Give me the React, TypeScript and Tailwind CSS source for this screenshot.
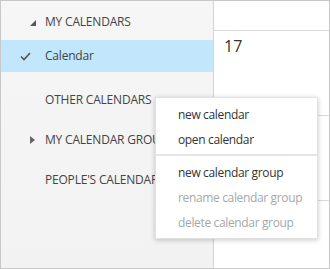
import React from 'react';

const font = { fontFamily: '"Open Sans", "Noto Sans", sans-serif' };

function Caret({ dir }: { dir: 'down' | 'right' }) {
  if (dir === 'down') {
    return (
      <svg width="6" height="6" viewBox="0 0 6 6" className="shrink-0">
        <path d="M6 0 L6 6 L0 6 Z" fill="#555" />
      </svg>
    );
  }
  return (
    <svg width="5" height="8" viewBox="0 0 5 8" className="shrink-0">
      <path d="M0 0 L5 4 L0 8 Z" fill="#666" />
    </svg>
  );
}

function Check() {
  return (
    <svg width="11" height="9" viewBox="0 0 11 9" className="shrink-0">
      <path d="M1 4.5 L4 7.5 L10 1" fill="none" stroke="#555" strokeWidth="1.6" />
    </svg>
  );
}

export default function App() {
  const menu = [
    { label: 'new calendar', disabled: false },
    { label: 'open calendar', disabled: false },
    { sep: true },
    { label: 'new calendar group', disabled: false },
    { label: 'rename calendar group', disabled: true },
    { label: 'delete calendar group', disabled: true },
  ];

  return (
    <div className="relative w-[330px] h-[269px] border border-[#c8c8c8] flex bg-white overflow-hidden text-[12px] text-[#444]" style={font}>
      {/* left pane */}
      <div className="w-[212px] h-full bg-gradient-to-b from-[#f6f6f6] to-[#f2f2f2] flex flex-col shrink-0 tracking-[-0.2px]">
        <div className="h-[39px] pt-[3px] flex items-center">
          <div className="w-[44px] flex justify-end pr-[9px] pt-[1px]"><Caret dir="down" /></div>
          <span>MY CALENDARS</span>
        </div>
        <div className="h-8 bg-[#c2e6fb] flex items-center">
          <div className="w-[44px] flex pl-[19px]"><Check /></div>
          <span>Calendar</span>
        </div>
        <div className="mt-2 h-10 flex items-center pl-[44px]">
          <span>OTHER CALENDARS</span>
        </div>
        <div className="h-10 flex items-center">
          <div className="w-[44px] flex pl-[29px]"><Caret dir="right" /></div>
          <span className="whitespace-nowrap">MY CALENDAR GROUPS</span>
        </div>
        <div className="h-10 flex items-center pl-[44px]">
          <span className="whitespace-nowrap">PEOPLE'S CALENDARS</span>
        </div>
      </div>

      {/* right pane */}
      <div className="flex-1 border-l border-[#d4d4d4] flex flex-col">
        <div className="h-[30px] border-b border-[#d8d8d8]"></div>
        <div className="h-[85px] border-b border-[#d8d8d8] pl-[10px] pt-[3px]">
          <span className="text-[16px] text-[#333]">17</span>
        </div>
        <div className="h-[85px] border-b border-[#d8d8d8]"></div>
      </div>

      {/* context menu */}
      <div className="absolute left-[154px] top-[96px] w-[163px] bg-white border border-[#e2e2e2] shadow-[0_1px_5px_rgba(0,0,0,0.22)] pt-1 pb-[3px] tracking-[-0.35px]">
        {menu.map((m, i) =>
          m.sep ? (
            <div key={i} className="mt-[2px] mb-[4px] h-[2px] bg-[#e6e6e6]"></div>
          ) : (
            <div key={i} className={`h-[25px] flex items-center pl-[22px] ${m.disabled ? 'text-[#a3a9a9]' : 'text-[#333]'}`}>
              {m.label}
            </div>
          )
        )}
      </div>
    </div>
  );
}
